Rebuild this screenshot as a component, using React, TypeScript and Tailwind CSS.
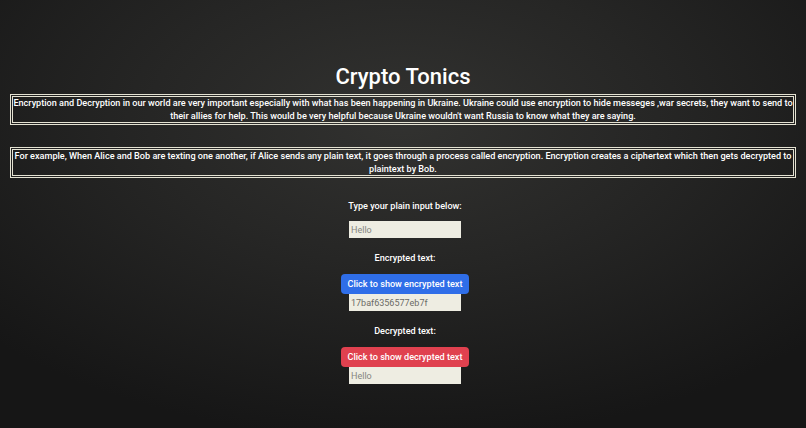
import { useState } from "react";

const intro =
  "Encryption and Decryption in our world are very important especially with what has been happening in Ukraine. Ukraine could use encryption to hide messeges ,war secrets, they want to send to their allies for help. This would be very helpful because Ukraine wouldn't want Russia to know what they are saying.";

const example =
  "For example, When Alice and Bob are texting one another, if Alice sends any plain text, it goes through a process called encryption. Encryption creates a ciphertext which then gets decrypted to plaintext by Bob.";

function InfoBox({ children }: { children: string }) {
  return (
    <p className="mx-[10px] border-[3px] border-double border-[#e4e2d2] px-0 py-0 text-center text-[9.1px] font-medium leading-[12.5px] text-white">
      {children}
    </p>
  );
}

function Field({ value, placeholder }: { value?: string; placeholder?: string }) {
  return (
    <input
      readOnly
      value={value ?? ""}
      placeholder={placeholder}
      className="block h-[17px] w-[112px] bg-[#eeede2] px-[2px] text-[9px] text-[#6b6b66] placeholder:text-[#85857f] outline-none"
    />
  );
}

export default function App() {
  const [cipher, setCipher] = useState("17baf6356577eb7f");
  const [plain, setPlain] = useState("");

  return (
    <div className="flex min-h-[428px] w-full flex-col items-center bg-[radial-gradient(ellipse_70%_75%_at_50%_28%,#323230_0%,#262625_45%,#161616_100%)] pt-[63px] font-['Roboto',sans-serif]">
      <h1 className="text-[22px] font-medium leading-[28px] text-white">Crypto Tonics</h1>
      <div className="mt-[3px] w-full">
        <InfoBox>{intro}</InfoBox>
      </div>
      <div className="mt-[22px] w-full">
        <InfoBox>{example}</InfoBox>
      </div>

      <div className="flex flex-col items-center pl-[4px]">
        <label className="mt-[22px] text-[9.1px] font-medium leading-[12px] text-white">Type your plain input below:</label>
        <div className="mt-[9px]">
          <Field placeholder="Hello" />
        </div>

        <span className="mt-[14px] text-[9.1px] font-medium leading-[12px] text-white">Encrypted text:</span>
        <button
          onClick={() => setCipher("17baf6356577eb7f")}
          className="mt-[10px] h-[20px] w-[128px] rounded-[4px] bg-[#2f6ee8] text-[9.1px] font-medium leading-[12px] text-white"
        >
          Click to show encrypted text
        </button>
        <Field value={cipher} />

        <span className="mt-[14px] text-[9.1px] font-medium leading-[12px] text-white">Decrypted text:</span>
        <button
          onClick={() => setPlain("Hello")}
          className="mt-[10px] h-[20px] w-[128px] rounded-[4px] bg-[#e0414f] text-[9.1px] font-medium leading-[12px] text-white"
        >
          Click to show decrypted text
        </button>
        <Field value={plain} placeholder="Hello" />
      </div>
    </div>
  );
}
